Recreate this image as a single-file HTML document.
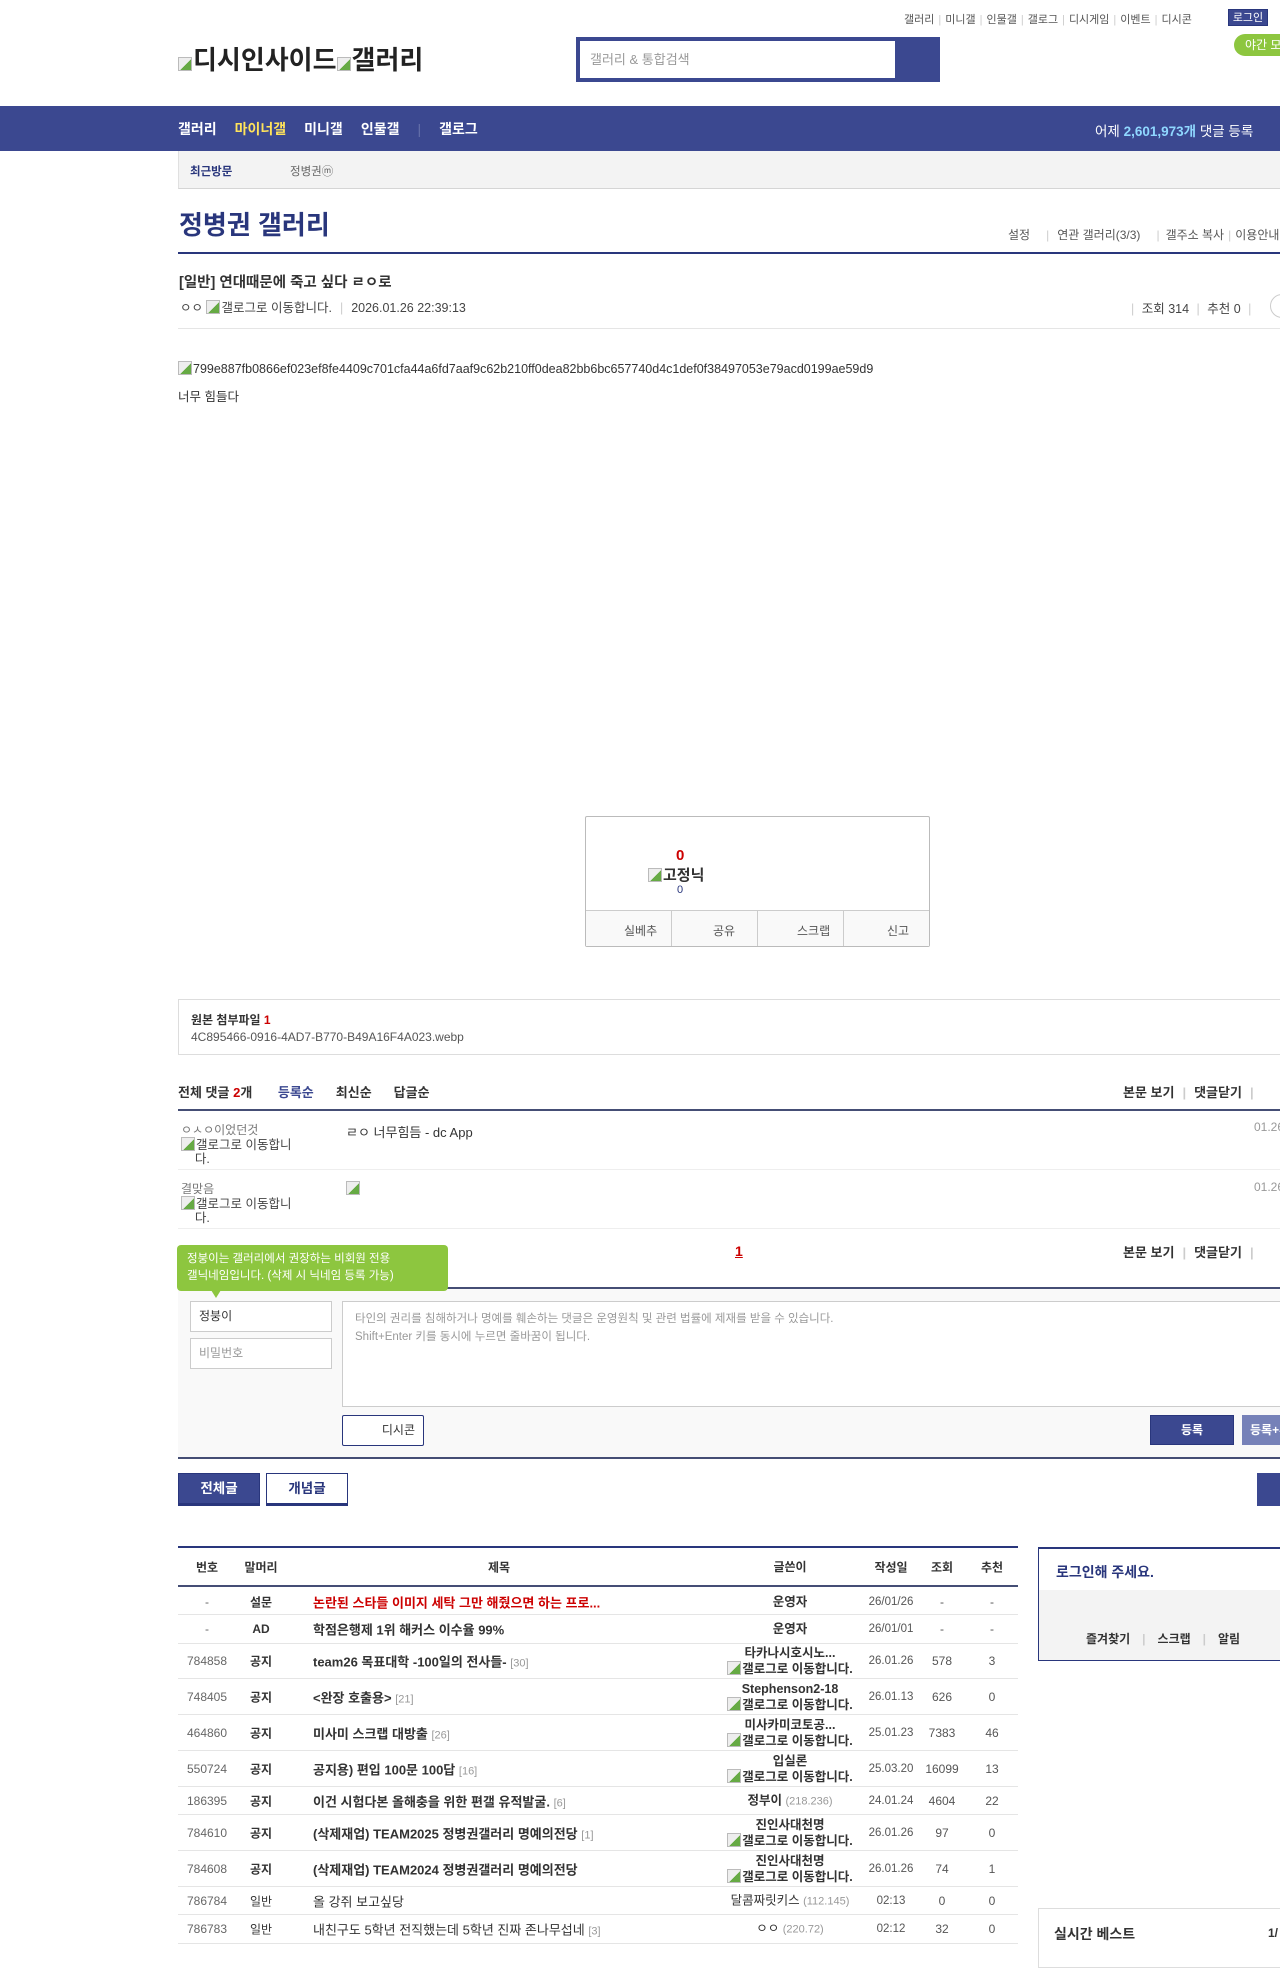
<!DOCTYPE html>
<html><head><meta charset="utf-8">
<style>
*{margin:0;padding:0;box-sizing:border-box}
body{width:1280px;height:1949px;overflow:hidden;position:relative;background:#fff;font-family:"Liberation Sans","Noto Sans CJK KR",sans-serif;font-size:13px;color:#333}
.a{position:absolute;white-space:nowrap}
.sep{color:#ccc;margin:0 4px}
.nav b{margin-right:18px}
.bi{display:inline-block;width:14px;height:14px;border:1px solid #bbb;background:linear-gradient(135deg,#eee 55%,#6a4 56%);vertical-align:-2px;margin-right:1px}
.row{position:absolute;left:178px;width:840px;border-bottom:1px solid #e5e5e5;font-size:12px}
.row span{position:absolute;top:50%;transform:translateY(-50%);white-space:nowrap}
.row span span{position:static;transform:none}
.c1{left:0;width:58px;text-align:center;color:#666}
.c2{left:58px;width:50px;text-align:center;font-weight:bold}
.c3{left:135px;font-size:13px}
.c4{left:515px;width:194px;text-align:center;font-size:12.5px;line-height:16px}
.c5{left:685px;width:56px;text-align:center;color:#555;font-size:11.5px}
.c6{left:742px;width:44px;text-align:center;color:#555}
.c7{left:792px;width:44px;text-align:center;color:#555}
.cnt{color:#999;font-size:11px;font-weight:normal}
</style></head><body>
<div class="a" style="left:904px;top:11px;font-size:11px;color:#555">갤러리<span class="sep">|</span>미니갤<span class="sep">|</span>인물갤<span class="sep">|</span>갤로그<span class="sep">|</span>디시게임<span class="sep">|</span>이벤트<span class="sep">|</span>디시콘</div>
<div class="a" style="left:1228px;top:9px;width:40px;height:17px;background:#3b4890;color:#fff;font-size:11px;text-align:center;line-height:17px;border:1px solid #29367c">로그인</div>
<div class="a" style="left:1234px;top:34px;width:60px;height:22px;background:#8dc63f;border-radius:11px;color:#fff;font-size:12px;line-height:22px;padding-left:11px">야간 모드</div>
<div class="a" style="left:178px;top:40px;font-size:26px;font-weight:bold;color:#222"><span class="bi"></span>디시인사이드<span class="bi"></span>갤러리</div>
<div class="a" style="left:576px;top:37px;width:364px;height:45px;background:#3b4890"></div>
<div class="a" style="left:580px;top:41px;width:315px;height:37px;background:#fff;color:#999;font-size:13px;line-height:37px;padding-left:10px">갤러리 &amp; 통합검색</div>
<div class="a" style="left:0;top:106px;width:1280px;height:45px;background:#3b4890"></div>
<div class="a nav" style="left:178px;top:119px;font-size:14px;color:#fff"><b>갤러리</b><b style="color:#ffe35b;margin-right:18px">마이너갤</b><b>미니갤</b><b>인물갤</b><span style="color:#6570aa;margin-right:18px">|</span><b>갤로그</b></div>
<div class="a" style="left:1095px;top:120px;font-size:13.5px;color:#fff">어제 <b style="color:#8fd7ff">2,601,973개</b> 댓글 등록</div>
<div class="a" style="left:178px;top:151px;width:1102px;height:38px;background:#f3f3f3;border-bottom:1px solid #d5d5d5;border-left:1px solid #e0e0e0"></div>
<div class="a" style="left:190px;top:163px;font-size:11.5px;font-weight:bold;color:#29367c">최근방문</div>
<div class="a" style="left:290px;top:163px;font-size:11.5px;color:#666">정병권ⓜ</div>
<div class="a" style="left:179px;top:205px;font-size:26px;font-weight:bold;color:#29367c">정병권 갤러리</div>
<div class="a" style="left:1008px;top:226px;font-size:12px;color:#555">설정<span class="sep" style="margin:0 8px 0 16px">|</span>연관 갤러리(3/3)<span class="sep" style="margin:0 6px 0 16px">|</span>갤주소 복사<span class="sep">|</span>이용안내</div>
<div class="a" style="left:178px;top:252px;width:1102px;height:2px;background:#29367c"></div>
<div class="a" style="left:179px;top:271px;font-size:14.5px;font-weight:bold;color:#333">[일반] 연대때문에 죽고 싶다 ㄹㅇ로</div>
<div class="a" style="left:180px;top:297px;font-size:12.5px;color:#444">ㅇㅇ <span class="bi"></span>갤로그로 이동합니다.<span class="sep" style="margin:0 8px">|</span>2026.01.26 22:39:13</div>
<div class="a" style="left:1127px;top:298px;font-size:12.5px;color:#444"><span class="sep">|</span> 조회 314 <span class="sep">|</span> 추천 0 <span class="sep">|</span></div>
<div class="a" style="left:1270px;top:294px;width:24px;height:24px;border:1px solid #ccc;border-radius:12px"></div>
<div class="a" style="left:178px;top:328px;width:1102px;height:1px;background:#e5e5e5"></div>
<div class="a" style="left:178px;top:361px;font-size:12.5px;color:#333"><span class="bi"></span>799e887fb0866ef023ef8fe4409c701cfa44a6fd7aaf9c62b210ff0dea82bb6bc657740d4c1def0f38497053e79acd0199ae59d9</div>
<div class="a" style="left:178px;top:386px;font-size:12.5px;color:#333">너무 힘들다</div>
<div class="a" style="left:585px;top:816px;width:345px;height:131px;border:1px solid #bbb;border-radius:2px"></div>
<div class="a" style="left:676px;top:847px;font-size:15px;font-weight:bold;color:#c00">0</div>
<div class="a" style="left:648px;top:864px;font-size:15px;font-weight:bold;color:#333"><span class="bi"></span>고정닉</div>
<div class="a" style="left:677px;top:884px;font-size:11px;color:#29367c">0</div>
<div class="a" style="left:586px;top:910px;width:343px;height:36px;background:#f9f9f9;border-top:1px solid #ccc"></div>
<div class="a" style="left:671px;top:910px;width:1px;height:36px;background:#ccc"></div>
<div class="a" style="left:757px;top:910px;width:1px;height:36px;background:#ccc"></div>
<div class="a" style="left:843px;top:910px;width:1px;height:36px;background:#ccc"></div>
<div class="a" style="left:624px;top:922px;font-size:12px;color:#555">실베추</div>
<div class="a" style="left:713px;top:922px;font-size:12px;color:#555">공유</div>
<div class="a" style="left:797px;top:922px;font-size:12px;color:#555">스크랩</div>
<div class="a" style="left:887px;top:922px;font-size:12px;color:#555">신고</div>
<div class="a" style="left:178px;top:999px;width:1102px;height:56px;border:1px solid #ddd;border-right:none"></div>
<div class="a" style="left:191px;top:1011px;font-size:12px;font-weight:bold;color:#333">원본 첨부파일 <span style="color:#c00">1</span></div>
<div class="a" style="left:191px;top:1030px;font-size:12px;color:#555">4C895466-0916-4AD7-B770-B49A16F4A023.webp</div>
<div class="a" style="left:178px;top:1082px;font-size:13px;font-weight:bold;color:#333">전체 댓글 <span style="color:#c00">2</span>개 <span style="color:#3b4890;margin-left:22px">등록순</span><span style="margin-left:22px">최신순</span><span style="margin-left:22px">답글순</span></div>
<div class="a" style="left:1123px;top:1082px;font-size:13px;font-weight:bold;color:#333">본문 보기<span class="sep" style="margin:0 8px">|</span>댓글닫기<span class="sep" style="margin:0 8px">|</span></div>
<div class="a" style="left:178px;top:1109px;width:1102px;height:2px;background:#454e75"></div>
<div class="a" style="left:181px;top:1123px;font-size:12px;color:#777;line-height:14px;width:130px;white-space:normal">ㅇㅅㅇ이었던것<br><span class="bi"></span><span style="color:#444;font-size:12.5px">갤로그로 이동합니<br>&nbsp;&nbsp;&nbsp;&nbsp;다.</span></div>
<div class="a" style="left:346px;top:1122px;font-size:13px;color:#333">ㄹㅇ 너무힘듬 - dc App</div>
<div class="a" style="left:1254px;top:1120px;font-size:12px;color:#999">01.26</div>
<div class="a" style="left:178px;top:1169px;width:1102px;height:1px;background:#eee"></div>
<div class="a" style="left:181px;top:1182px;font-size:12px;color:#777;line-height:14px;width:130px;white-space:normal">결맞음<br><span class="bi"></span><span style="color:#444;font-size:12.5px">갤로그로 이동합니<br>&nbsp;&nbsp;&nbsp;&nbsp;다.</span></div>
<div class="a" style="left:346px;top:1181px"><span class="bi"></span></div>
<div class="a" style="left:1254px;top:1180px;font-size:12px;color:#999">01.26</div>
<div class="a" style="left:178px;top:1228px;width:1102px;height:1px;background:#eee"></div>
<div class="a" style="left:735px;top:1243px;font-size:14px;font-weight:bold;color:#c00;text-decoration:underline">1</div>
<div class="a" style="left:1123px;top:1242px;font-size:13px;font-weight:bold;color:#333">본문 보기<span class="sep" style="margin:0 8px">|</span>댓글닫기<span class="sep" style="margin:0 8px">|</span></div>
<div class="a" style="left:178px;top:1287px;width:1102px;height:2px;background:#454e75"></div>
<div class="a" style="left:178px;top:1289px;width:1102px;height:168px;background:#f9f9f9"></div>
<div class="a" style="left:177px;top:1245px;width:271px;height:46px;background:#8dc63f;border-radius:4px;color:#fff;font-size:11.5px;line-height:17px;padding:6px 0 0 10px">정붕이는 갤러리에서 권장하는 비회원 전용<br>갤닉네임입니다. (삭제 시 닉네임 등록 가능)</div>
<div class="a" style="left:211px;top:1290px;width:0;height:0;border-left:5px solid transparent;border-right:5px solid transparent;border-top:8px solid #8dc63f"></div>
<div class="a" style="left:190px;top:1301px;width:142px;height:31px;background:#fff;border:1px solid #ccc;font-size:12px;color:#333;line-height:29px;padding-left:8px">정붕이</div>
<div class="a" style="left:190px;top:1338px;width:142px;height:31px;background:#fff;border:1px solid #ccc;font-size:12px;color:#999;line-height:29px;padding-left:8px">비밀번호</div>
<div class="a" style="left:342px;top:1301px;width:950px;height:106px;background:#fff;border:1px solid #ccc;font-size:11.5px;color:#999;line-height:18px;padding:8px 12px">타인의 권리를 침해하거나 명예를 훼손하는 댓글은 운영원칙 및 관련 법률에 제재를 받을 수 있습니다.<br>Shift+Enter 키를 동시에 누르면 줄바꿈이 됩니다.</div>
<div class="a" style="left:342px;top:1415px;width:82px;height:31px;background:#fff;border:1px solid #29367c;border-radius:2px;font-size:12px;color:#333;line-height:29px;text-align:right;padding-right:8px">디시콘</div>
<div class="a" style="left:1150px;top:1415px;width:84px;height:30px;background:#3b4890;border:1px solid #29367c;font-size:12px;font-weight:bold;color:#fff;line-height:28px;text-align:center">등록</div>
<div class="a" style="left:1242px;top:1415px;width:84px;height:30px;background:#7681b8;font-size:12px;font-weight:bold;color:#fff;line-height:30px;padding-left:8px">등록+추천</div>
<div class="a" style="left:178px;top:1457px;width:1102px;height:2px;background:#454e75"></div>
<div class="a" style="left:178px;top:1473px;width:82px;height:33px;background:#3b4890;border:1px solid #29367c;border-bottom-width:3px;color:#fff;font-size:13.5px;font-weight:bold;text-align:center;line-height:29px">전체글</div>
<div class="a" style="left:266px;top:1473px;width:82px;height:33px;background:#fff;border:1px solid #29367c;border-bottom-width:3px;color:#29367c;font-size:13.5px;font-weight:bold;text-align:center;line-height:29px">개념글</div>
<div class="a" style="left:1257px;top:1473px;width:40px;height:33px;background:#3b4890"></div>
<div class="a" style="left:178px;top:1546px;width:840px;height:2px;background:#29367c"></div>
<div class="row" style="top:1548px;height:39px;border-bottom:2px solid #454e75;font-weight:bold;color:#333">
<span class="c1" style="color:#333">번호</span><span class="c2">말머리</span><span class="c3" style="left:310px;font-weight:bold;font-size:12px">제목</span><span class="c4" style="font-weight:bold;font-size:12px">글쓴이</span><span class="c5" style="color:#333;font-size:12px">작성일</span><span class="c6" style="color:#333">조회</span><span class="c7" style="color:#333">추천</span></div>
<div class="row" style="top:1589px;height:26px"><span class="c1">-</span><span class="c2">설문</span><span class="c3" style="color:#c00;font-weight:bold">논란된 스타들 이미지 세탁 그만 해줬으면 하는 프로...</span><span class="c4" style="font-weight:bold">운영자</span><span class="c5">26/01/26</span><span class="c6">-</span><span class="c7">-</span></div>
<div class="row" style="top:1615px;height:29px"><span class="c1">-</span><span class="c2">AD</span><span class="c3" style="font-weight:bold">학점은행제 1위 해커스 이수율 99%</span><span class="c4" style="font-weight:bold">운영자</span><span class="c5">26/01/01</span><span class="c6">-</span><span class="c7">-</span></div>
<div class="row" style="top:1644px;height:35px"><span class="c1">784858</span><span class="c2">공지</span><span class="c3" style="font-weight:bold">team26 목표대학 -100일의 전사들- <span class="cnt">[30]</span></span><span class="c4" style="font-weight:bold">타카나시호시노...<br><span class="bi"></span>갤로그로 이동합니다.</span><span class="c5">26.01.26</span><span class="c6">578</span><span class="c7">3</span></div>
<div class="row" style="top:1679px;height:36px"><span class="c1">748405</span><span class="c2">공지</span><span class="c3" style="font-weight:bold">&lt;완장 호출용&gt; <span class="cnt">[21]</span></span><span class="c4" style="font-weight:bold">Stephenson2-18<br><span class="bi"></span>갤로그로 이동합니다.</span><span class="c5">26.01.13</span><span class="c6">626</span><span class="c7">0</span></div>
<div class="row" style="top:1715px;height:36px"><span class="c1">464860</span><span class="c2">공지</span><span class="c3" style="font-weight:bold">미사미 스크랩 대방출 <span class="cnt">[26]</span></span><span class="c4" style="font-weight:bold">미사카미코토공...<br><span class="bi"></span>갤로그로 이동합니다.</span><span class="c5">25.01.23</span><span class="c6">7383</span><span class="c7">46</span></div>
<div class="row" style="top:1751px;height:36px"><span class="c1">550724</span><span class="c2">공지</span><span class="c3" style="font-weight:bold">공지용) 편입 100문 100답 <span class="cnt">[16]</span></span><span class="c4" style="font-weight:bold">입실론<br><span class="bi"></span>갤로그로 이동합니다.</span><span class="c5">25.03.20</span><span class="c6">16099</span><span class="c7">13</span></div>
<div class="row" style="top:1787px;height:28px"><span class="c1">186395</span><span class="c2">공지</span><span class="c3" style="font-weight:bold">이건 시험다본 올해충을 위한 편갤 유적발굴. <span class="cnt">[6]</span></span><span class="c4" style="font-weight:bold">정부이 <span class="cnt">(218.236)</span></span><span class="c5">24.01.24</span><span class="c6">4604</span><span class="c7">22</span></div>
<div class="row" style="top:1815px;height:36px"><span class="c1">784610</span><span class="c2">공지</span><span class="c3" style="font-weight:bold">(삭제재업) TEAM2025 정병권갤러리 명예의전당 <span class="cnt">[1]</span></span><span class="c4" style="font-weight:bold">진인사대천명<br><span class="bi"></span>갤로그로 이동합니다.</span><span class="c5">26.01.26</span><span class="c6">97</span><span class="c7">0</span></div>
<div class="row" style="top:1851px;height:36px"><span class="c1">784608</span><span class="c2">공지</span><span class="c3" style="font-weight:bold">(삭제재업) TEAM2024 정병권갤러리 명예의전당</span><span class="c4" style="font-weight:bold">진인사대천명<br><span class="bi"></span>갤로그로 이동합니다.</span><span class="c5">26.01.26</span><span class="c6">74</span><span class="c7">1</span></div>
<div class="row" style="top:1887px;height:28px"><span class="c1">786784</span><span class="c2" style="font-weight:normal">일반</span><span class="c3">올 강쥐 보고싶당</span><span class="c4">달콤짜릿키스 <span class="cnt">(112.145)</span></span><span class="c5">02:13</span><span class="c6">0</span><span class="c7">0</span></div>
<div class="row" style="top:1915px;height:29px"><span class="c1">786783</span><span class="c2" style="font-weight:normal">일반</span><span class="c3">내친구도 5학년 전직했는데 5학년 진짜 존나무섭네 <span class="cnt">[3]</span></span><span class="c4">ㅇㅇ <span class="cnt">(220.72)</span></span><span class="c5">02:12</span><span class="c6">32</span><span class="c7">0</span></div>
<div class="a" style="left:1038px;top:1547px;width:300px;height:114px;border:1px solid #29367c;border-top-width:2px"></div>
<div class="a" style="left:1039px;top:1590px;width:300px;height:70px;background:#f3f3f3"></div>
<div class="a" style="left:1056px;top:1562px;font-size:14px;font-weight:bold;color:#29367c">로그인해 주세요.</div>
<div class="a" style="left:1086px;top:1630px;font-size:12px;font-weight:bold;color:#333">즐겨찾기<span class="sep" style="margin:0 12px">|</span>스크랩<span class="sep" style="margin:0 12px">|</span>알림</div>
<div class="a" style="left:1038px;top:1908px;width:300px;height:60px;border:1px solid #ddd"></div>
<div class="a" style="left:1054px;top:1924px;font-size:14px;font-weight:bold;color:#333">실시간 베스트</div>
<div class="a" style="left:1268px;top:1926px;font-size:12px;font-weight:bold;color:#333">1/</div>
</body></html>
